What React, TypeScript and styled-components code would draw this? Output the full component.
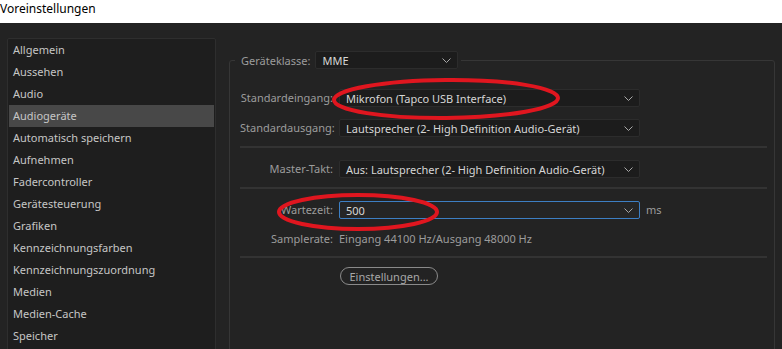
import React from "react";
import styled, { createGlobalStyle } from "styled-components";

const categories = [
  "Allgemein",
  "Aussehen",
  "Audio",
  "Audiogeräte",
  "Automatisch speichern",
  "Aufnehmen",
  "Fadercontroller",
  "Gerätesteuerung",
  "Grafiken",
  "Kennzeichnungsfarben",
  "Kennzeichnungszuordnung",
  "Medien",
  "Medien-Cache",
  "Speicher",
];

const GlobalStyle = createGlobalStyle`
  html, body {
    margin: 0;
    padding: 0;
    background: #232323;
  }
  body {
    font-family: "Noto Sans", "Open Sans", Arial, sans-serif;
    font-size: 11px;
  }
`;

const Window = styled.div`
  position: relative;
  width: 782px;
  height: 349px;
  overflow: hidden;
  background: #232323;
  display: flex;
  flex-direction: column;
`;

const TitleBar = styled.div`
  height: 23px;
  flex: none;
  background: #ffffff;
  color: #000000;
  font-size: 12px;
  line-height: 17px;
  box-sizing: border-box;
`;

const Body = styled.div`
  flex: 1;
  display: flex;
  gap: 13px;
  padding: 15px 7px 0 7px;
`;

const CategoryList = styled.ul`
  list-style: none;
  margin: 0;
  padding: 0 1px;
  width: 209px;
  height: 340px;
  box-sizing: border-box;
  background: #1e1e1e;
  border: 1px solid #2e2e2e;
  border-radius: 2px;
  flex: none;
`;

const CategoryItem = styled.li<{ $active?: boolean }>`
  height: 22px;
  line-height: 22px;
  padding-left: 4px;
  color: #c6c6c6;
  background: ${(p) => (p.$active ? "#484848" : "transparent")};
`;

const Group = styled.fieldset`
  margin: 13px 0 0 0;
  padding: 0 7px 0 10px;
  width: 547px;
  height: 340px;
  box-sizing: border-box;
  border: 1px solid #363636;
  border-radius: 3px;
  min-width: 0;
`;

const Legend = styled.legend`
  display: flex;
  align-items: center;
  gap: 5px;
  margin-left: -5px;
  padding: 0 3px 0 6px;
  color: #9c9c9c;
`;

const Section = styled.div<{ $top: number; $bottom: number; $gap?: number; $last?: boolean }>`
  display: grid;
  grid-template-columns: 93px 301px auto;
  column-gap: 6px;
  row-gap: ${(p) => p.$gap ?? 12}px;
  align-items: center;
  padding-top: ${(p) => p.$top}px;
  padding-bottom: ${(p) => p.$bottom}px;
  border-bottom: ${(p) => (p.$last ? "none" : "2px solid #333333")};
`;

const Label = styled.span`
  color: #9c9c9c;
  text-align: right;
  white-space: nowrap;
  line-height: 18px;
`;

const Value = styled.span`
  color: #9c9c9c;
  white-space: nowrap;
  line-height: 18px;
`;

const Select = styled.div<{ $focus?: boolean; $width?: number }>`
  box-sizing: border-box;
  height: 18px;
  width: ${(p) => (p.$width ? `${p.$width}px` : "100%")};
  display: flex;
  align-items: center;
  justify-content: space-between;
  padding: 0 6px 0 6px;
  background: ${(p) => (p.$focus ? "#252525" : "#1c1c1c")};
  border: 1px solid ${(p) => (p.$focus ? "#3d7fc4" : "#2c2c2c")};
  border-radius: 2px;
  color: #d6d6d6;
  white-space: nowrap;
  overflow: hidden;
`;

const Unit = styled.span`
  color: #9c9c9c;
  line-height: 18px;
`;

const PillButton = styled.button`
  grid-column: 2;
  justify-self: start;
  margin-left: 1px;
  height: 18px;
  width: 98px;
  padding: 0;
  background: transparent;
  border: 1px solid #8a8a8a;
  border-radius: 9px;
  color: #a8a8a8;
  font: inherit;
  line-height: 15px;
`;

const Annotations = styled.svg`
  position: absolute;
  left: 0;
  top: 0;
  pointer-events: none;
`;

const Chevron = () => (
  <svg width="9" height="5" viewBox="0 0 9 5" style={{ flex: "none" }}>
    <polyline points="0.5,0.5 4.5,4.5 8.5,0.5" fill="none" stroke="#a8a8a8" strokeWidth="1" />
  </svg>
);

export default function App() {
  return (
    <Window>
      <GlobalStyle />
      <TitleBar>Voreinstellungen</TitleBar>
      <Body>
        <CategoryList>
          {categories.map((c) => (
            <CategoryItem key={c} $active={c === "Audiogeräte"}>
              {c}
            </CategoryItem>
          ))}
        </CategoryList>
        <Group>
          <Legend>
            Geräteklasse:
            <Select $width={143}>
              MME
              <Chevron />
            </Select>
          </Legend>
          <Section $top={20} $bottom={9}>
            <Label>Standardeingang:</Label>
            <Select>
              Mikrofon (Tapco USB Interface)
              <Chevron />
            </Select>
            <span />
            <Label>Standardausgang:</Label>
            <Select>
              Lautsprecher (2- High Definition Audio-Gerät)
              <Chevron />
            </Select>
            <span />
          </Section>
          <Section $top={12} $bottom={9}>
            <Label>Master-Takt:</Label>
            <Select>
              Aus: Lautsprecher (2- High Definition Audio-Gerät)
              <Chevron />
            </Select>
            <span />
          </Section>
          <Section $top={12} $bottom={8} $gap={11}>
            <Label>Wartezeit:</Label>
            <Select $focus>
              500
              <Chevron />
            </Select>
            <Unit>ms</Unit>
            <Label>Samplerate:</Label>
            <Value>Eingang 44100 Hz/Ausgang 48000 Hz</Value>
            <span />
          </Section>
          <Section $top={9} $bottom={0} $last>
            <PillButton>Einstellungen...</PillButton>
          </Section>
        </Group>
      </Body>
      <Annotations width="782" height="349" viewBox="0 0 782 349">
        <ellipse cx="446" cy="99" rx="112" ry="19" fill="none" stroke="#e0161f" strokeWidth="4" transform="rotate(-0.5 446 99)" />
        <ellipse cx="358" cy="212" rx="79" ry="17" fill="none" stroke="#e0161f" strokeWidth="4" />
      </Annotations>
    </Window>
  );
}
